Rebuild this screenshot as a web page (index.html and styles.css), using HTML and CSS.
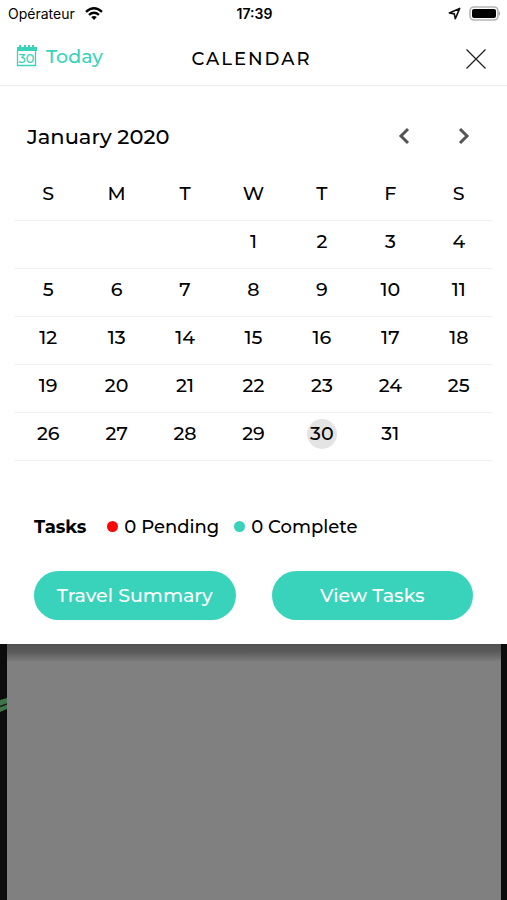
FILE: index.html
```html
<!DOCTYPE html>
<html lang="en">
<head>
<meta charset="utf-8">
<meta name="viewport" content="width=device-width, initial-scale=1">
<title>Calendar</title>
<link rel="stylesheet" href="styles.css">
</head>
<body>
<main class="sheet">
  <div class="status">
    <div class="carrier"><span>Opérateur</span>
      <svg width="18" height="13" viewBox="0 0 18 13" fill="none" stroke="#000" stroke-width="2.4" aria-hidden="true"><path d="M1 4.8Q9-2.2 17 4.8M4 7.9Q9 3.6 14 7.9"/><path d="M6.2 10Q9 7.8 11.8 10L9 13z" fill="#000" stroke="none"/></svg>
    </div>
    <time class="clock">17:39</time>
    <div class="indicators">
      <svg width="13" height="13" viewBox="0 0 13 13" fill="none" stroke="#111" stroke-width="1.6" stroke-linejoin="round" aria-hidden="true"><path d="M11.7 1.4 1.3 6l5 .9 1 4.9z"/></svg>
      <svg width="32" height="15" viewBox="0 0 32 15" aria-hidden="true"><rect x="1" y="1" width="28" height="13" rx="4" fill="#fff" stroke="#b4b4b4" stroke-width="1.6"/><rect x="3" y="3" width="24" height="9" rx="2"/><path d="M30 5q2 2.500 0 5z" fill="#999"/></svg>
    </div>
  </div>
  <header class="bar">
    <button class="today" type="button">
      <svg width="21" height="22" viewBox="0 0 21 22" aria-hidden="true"><path d="M1 2h2V0h2v2h3V0h2v2h2V0h2v2h2V0h2v2h3v4H1z" fill="#38d3ba"/><path d="M1.500 5v15.500h18V5" fill="none" stroke="#38d3ba" stroke-width="1.300"/><text class="glyph" x="10.500" y="18" text-anchor="middle">30</text></svg>
      <span>Today</span>
    </button>
    <h1>CALENDAR</h1>
    <button class="close" type="button" aria-label="Close">
      <svg width="22" height="22" viewBox="0 0 22 22" fill="none" stroke="#222" stroke-width="1.3"><path d="M1.500 1.500l19 19M20.500 1.500l-19 19"/></svg>
    </button>
  </header>
  <section class="month">
    <h2>January 2020</h2>
    <button type="button" aria-label="Previous month"><svg width="12" height="18" viewBox="0 0 12 18"><path d="M10 2 3 9l7 7"/></svg></button>
    <button type="button" aria-label="Next month"><svg width="12" height="18" viewBox="0 0 12 18"><path d="M2 2l7 7-7 7"/></svg></button>
  </section>
  <table class="days">
    <thead><tr><th>S</th><th>M</th><th>T</th><th>W</th><th>T</th><th>F</th><th>S</th></tr></thead>
    <tbody>
      <tr><td></td><td></td><td></td><td>1</td><td>2</td><td>3</td><td>4</td></tr>
      <tr><td>5</td><td>6</td><td>7</td><td>8</td><td>9</td><td>10</td><td>11</td></tr>
      <tr><td>12</td><td>13</td><td>14</td><td>15</td><td>16</td><td>17</td><td>18</td></tr>
      <tr><td>19</td><td>20</td><td>21</td><td>22</td><td>23</td><td>24</td><td>25</td></tr>
      <tr><td>26</td><td>27</td><td>28</td><td>29</td><td><span class="current">30</span></td><td>31</td><td></td></tr>
    </tbody>
  </table>
  <section class="tasks">
    <h3>Tasks</h3>
    <span class="count pending">0 Pending</span>
    <span class="count complete">0 Complete</span>
  </section>
  <div class="actions">
    <button type="button">Travel Summary</button>
    <button type="button">View Tasks</button>
  </div>
</main>
<div class="backdrop">
  <svg class="road" width="7" height="18" viewBox="0 0 7 18" aria-hidden="true"><path d="M0 3 7 1v11l-7 3z" fill="#3f7548"/><path d="M0 9.500 7 7" stroke="#171b20" stroke-width="1.500"/></svg>
  <div class="dim"></div>
</div>
</body>
</html>
```
FILE: styles.css
```css
* { box-sizing: border-box; }
body {
  margin: 0;
  min-height: 100vh;
  display: flex;
  flex-direction: column;
  background: #0c0c0c;
  color: #000;
  font-family: Montserrat, Inter, sans-serif;
  font-size: 19px;
  font-weight: 500;
}
h1, h2, h3 { margin: 0; }
button {
  border: 0;
  padding: 0;
  background: none;
  color: inherit;
  font: inherit;
  cursor: pointer;
}
svg { display: block; }
.sheet { background: #fff; padding-bottom: 24px; }
.status, .bar {
  display: grid;
  grid-template-columns: 1fr auto 1fr;
  align-items: center;
}
.status {
  height: 27px;
  padding: 0 6px 0 8px;
  font: 14px Inter, sans-serif;
}
.carrier, .indicators { display: flex; align-items: center; gap: 8px; }
.carrier { gap: 10px; }
.indicators { justify-content: flex-end; }
.clock { font-weight: 600; }
.bar {
  height: 59px;
  padding: 6px 20px 0 16px;
  border-bottom: 1px solid #eee;
}
.today {
  display: flex;
  align-items: center;
  justify-self: start;
  gap: 9px;
  padding-bottom: 6px;
  color: #38d3ba;
}
.glyph { font-size: 13px; font-weight: 500; fill: #38d3ba; }
.bar h1 { font-size: 18px; font-weight: 500; letter-spacing: 2px; }
.close { justify-self: end; }
.month {
  display: flex;
  align-items: center;
  height: 100px;
  padding: 0 27px;
}
.month h2 { flex: 1; font-size: 21px; font-weight: 500; }
.month button { width: 32px; height: 40px; display: grid; place-items: center; }
.month button + button { margin-left: 28px; }
.month path { fill: none; stroke: #555; stroke-width: 3; }
.days {
  width: calc(100% - 28px);
  margin: -18px 14px 0;
  table-layout: fixed;
  border-collapse: collapse;
  text-align: center;
}
.days th, .days td {
  height: 48px;
  padding: 0 0 5px;
  border-bottom: 1px solid #f2f2f2;
  font-weight: 500;
}
.days th { height: 52px; padding: 0; }
.current {
  display: grid;
  place-items: center;
  width: 30px;
  height: 30px;
  margin: 0 auto;
  border-radius: 50%;
  background: #e4e4e4;
}
.tasks {
  display: flex;
  align-items: center;
  gap: 15px;
  margin-top: 54px;
  padding: 0 34px;
  font-size: 18px;
  line-height: 24px;
}
.tasks h3 { margin-right: 6px; font-size: 18px; font-weight: 700; }
.count { display: flex; align-items: center; gap: 6px; }
.count::before {
  content: "";
  width: 11px;
  height: 11px;
  border-radius: 50%;
  background: #fb0606;
}
.complete::before { background: #38d3ba; }
.actions {
  display: grid;
  grid-template-columns: 1fr 1fr;
  gap: 36px;
  margin-top: 32px;
  padding: 0 34px;
}
.actions button {
  height: 49px;
  border-radius: 25px;
  background: #38d3ba;
  color: #fff;
}
.backdrop {
  flex: 1;
  position: relative;
  display: flex;
  padding: 0 6px 0 7px;
}
.dim {
  flex: 1;
  background: linear-gradient(#515151, #5a5a5a 8px, #808080 18px);
}
.road { position: absolute; left: 0; top: 53px; }
```
